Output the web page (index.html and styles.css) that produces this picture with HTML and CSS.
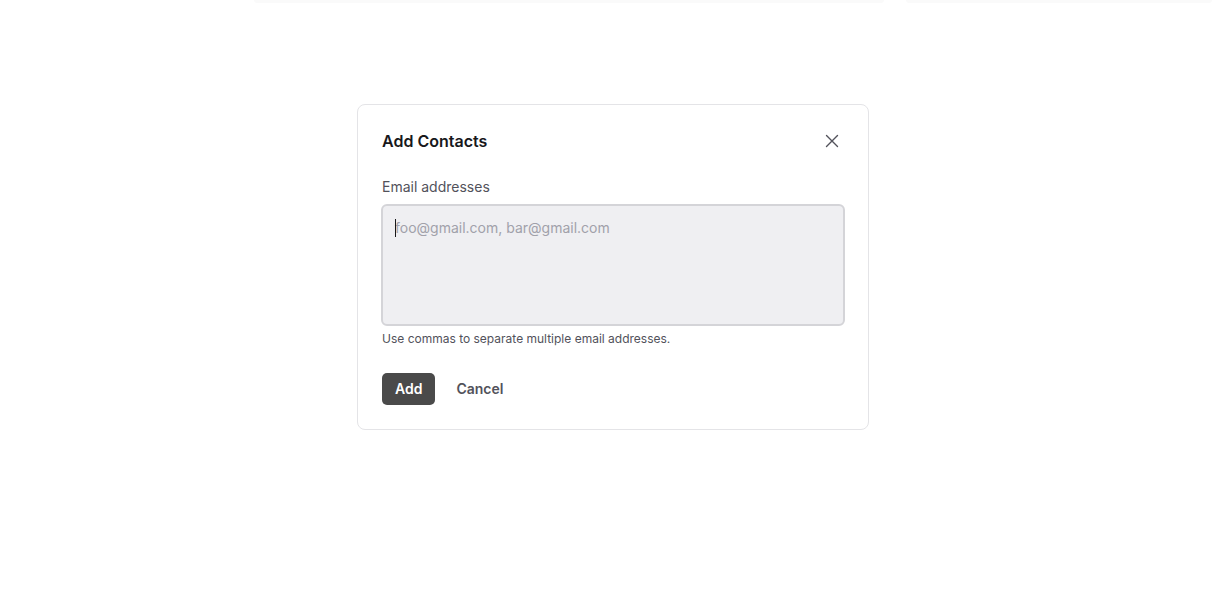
FILE: index.html
```
<!DOCTYPE html>
<html>
<head>
<meta charset="utf-8">
<link rel="stylesheet" href="styles.css">
</head>
<body>
<div class="topbar">
  <div class="ghost ghost-a"></div>
  <div class="ghost ghost-b"></div>
</div>
<main class="stage">
  <section class="dialog">
    <header class="dialog-head">
      <h2 class="title">Add Contacts</h2>
      <button class="close" aria-label="Close">
        <svg width="16" height="16" viewBox="0 0 16 16" fill="none" stroke="#52525b" stroke-width="1.4" stroke-linecap="round"><path d="M2.5 2.5 L13.5 13.5 M13.5 2.5 L2.5 13.5"/></svg>
      </button>
    </header>
    <label class="label" for="emails">Email addresses</label>
    <div class="field">
      <span class="caret"></span>
      <textarea id="emails" class="input" placeholder="foo@gmail.com, bar@gmail.com"></textarea>
    </div>
    <p class="help">Use commas to separate multiple email addresses.</p>
    <div class="actions">
      <button class="btn btn-primary">Add</button>
      <button class="btn btn-ghost">Cancel</button>
    </div>
  </section>
</main>
</body>
</html>
```
FILE: styles.css
```
* { box-sizing: border-box; }
html, body { margin: 0; padding: 0; background: #ffffff; }
body {
  font-family: Inter, "Liberation Sans", sans-serif;
  color: #18181b;
  width: 1222px;
  height: 607px;
  overflow: hidden;
}
.topbar {
  height: 3px;
  display: flex;
  padding-left: 254px;
  gap: 22px;
}
.ghost { height: 3px; background: #fafafa; border-radius: 0 0 3px 3px; }
.ghost-a { width: 630px; }
.ghost-b { width: 306px; }
.stage {
  display: flex;
  justify-content: center;
  padding-top: 101px;
  padding-left: 4px;
}
.dialog {
  width: 512px;
  border: 1px solid #e4e4e7;
  border-radius: 8px;
  padding: 24px 23px 24px 24px;
  display: flex;
  flex-direction: column;
}
.dialog-head {
  display: flex;
  justify-content: space-between;
  align-items: center;
  height: 24px;
  margin-bottom: 24px;
}
.title {
  margin: 0;
  font-size: 16px;
  font-weight: 600;
  color: #18181b;
  line-height: 24px;
}
.close {
  border: 0;
  background: none;
  padding: 0;
  width: 16px;
  height: 16px;
  margin-right: 5px;
  display: flex;
}
.label {
  font-size: 14px;
  color: #52525b;
  line-height: 20px;
  margin-bottom: 7px;
}
.field { position: relative; margin-left: -1px; }
.input {
  display: block;
  width: 464px;
  height: 122px;
  resize: none;
  border: 2px solid #d4d4d8;
  border-radius: 6px;
  background: #efeff2;
  padding: 12px 12px 10px;
  font-family: Inter, "Liberation Sans", sans-serif;
  font-size: 14px;
  line-height: 20px;
  color: #18181b;
  outline: none;
}
.input::placeholder { color: #a1a1aa; }
.caret {
  position: absolute;
  left: 14px;
  top: 15px;
  width: 1px;
  height: 18px;
  background: #18181b;
}
.help {
  margin: 4px 0 0 0;
  font-size: 12px;
  line-height: 18px;
  color: #52525b;
}
.actions {
  display: flex;
  align-items: center;
  gap: 8px;
  margin-top: 25px;
}
.btn {
  font-family: Inter, "Liberation Sans", sans-serif;
  font-size: 14px;
  font-weight: 600;
  height: 32px;
  border: 0;
  border-radius: 5px;
  padding: 0 13px;
  line-height: 32px;
}
.btn-primary { background: #4a4a4a; color: #ffffff; }
.btn-ghost { background: none; color: #52525b; }
```
